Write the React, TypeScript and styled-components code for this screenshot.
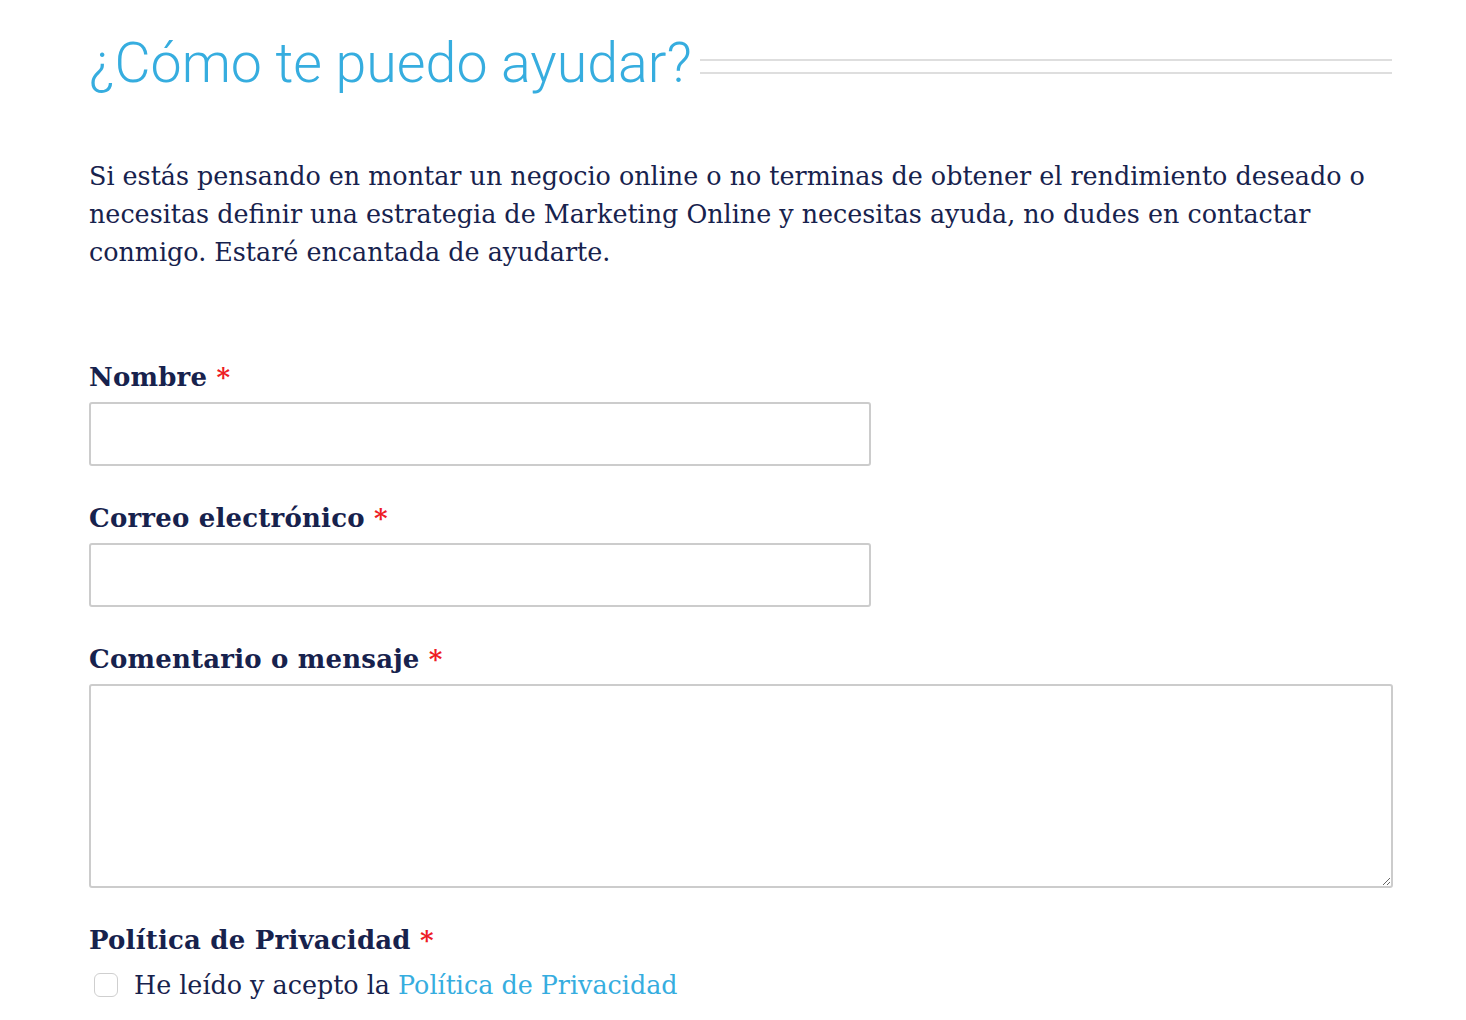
import styled, { createGlobalStyle } from "styled-components";

const GlobalStyle = createGlobalStyle`
  html, body {
    margin: 0;
    padding: 0;
    background: #fff;
  }
  * {
    box-sizing: border-box;
  }
`;

const NAVY = "#17224d";
const BLUE = "#36addf";
const SLAB = `"DejaVu Serif", "Liberation Serif", serif`;

export default function App() {
  return (
    <>
      <GlobalStyle />
      <Page>
        <TitleRow>
          <Title>¿Cómo te puedo ayudar?</Title>
          <DoubleRule />
        </TitleRow>
        <Intro>
          Si estás pensando en montar un negocio online o no terminas de obtener el
          rendimiento deseado o necesitas definir una estrategia de Marketing Online y
          necesitas ayuda, no dudes en contactar conmigo. Estaré encantada de ayudarte.
        </Intro>
        <Form>
          <Field>
            <Label>
              Nombre <Req>*</Req>
            </Label>
            <TextInput type="text" />
          </Field>
          <Field>
            <Label>
              Correo electrónico <Req>*</Req>
            </Label>
            <TextInput type="email" />
          </Field>
          <Field>
            <Label>
              Comentario o mensaje <Req>*</Req>
            </Label>
            <Message />
          </Field>
          <Field>
            <Label>
              Política de Privacidad <Req>*</Req>
            </Label>
            <CheckRow>
              <Check type="checkbox" />
              <span>
                He leído y acepto la <Link href="#">Política de Privacidad</Link>
              </span>
            </CheckRow>
          </Field>
        </Form>
      </Page>
    </>
  );
}

const Page = styled.div`
  width: 1392px;
  padding: 26px 0 0 89px;
`;

const TitleRow = styled.div`
  display: flex;
  align-items: center;
  gap: 8px;
`;

const Title = styled.h1`
  margin: 0;
  font-family: Roboto, "Liberation Sans", sans-serif;
  font-weight: 300;
  font-size: 55.5px;
  line-height: 76px;
  color: ${BLUE};
  white-space: nowrap;
`;

const DoubleRule = styled.div`
  flex: 1;
  height: 15px;
  margin-top: 4px;
  border-top: 2px solid #dedede;
  border-bottom: 2px solid #dedede;
`;

const Intro = styled.p`
  margin: 55px 0 0;
  font-family: ${SLAB};
  font-weight: 300;
  font-size: 25.4px;
  line-height: 38px;
  color: ${NAVY};
`;

const Form = styled.form`
  margin-top: 90px;
  display: flex;
  flex-direction: column;
  gap: 36px;
`;

const Field = styled.div`
  display: flex;
  flex-direction: column;
  gap: 9px;
`;

const Label = styled.label`
  font-family: ${SLAB};
  font-weight: 700;
  font-size: 26px;
  line-height: 32px;
  letter-spacing: 0.2px;
  color: ${NAVY};
`;

const Req = styled.span`
  color: #ee1c25;
`;

const TextInput = styled.input`
  width: 782px;
  height: 64px;
  border: 2px solid #cccccc;
  border-radius: 3px;
  background: #fff;
  outline: none;
`;

const Message = styled.textarea`
  width: 1304px;
  height: 204px;
  border: 2px solid #cccccc;
  border-radius: 3px;
  background: #fff;
  outline: none;
  resize: vertical;
`;

const CheckRow = styled.div`
  display: flex;
  align-items: center;
  gap: 16px;
  margin-top: 3px;
  padding-left: 5px;
  font-family: ${SLAB};
  font-size: 25.4px;
  line-height: 34px;
  color: ${NAVY};
`;

const Check = styled.input`
  appearance: none;
  margin: 0;
  width: 24px;
  height: 24px;
  border: 1px solid #cfcfcf;
  border-radius: 6px;
  background: #fff;
`;

const Link = styled.a`
  color: ${BLUE};
  text-decoration: none;
`;
